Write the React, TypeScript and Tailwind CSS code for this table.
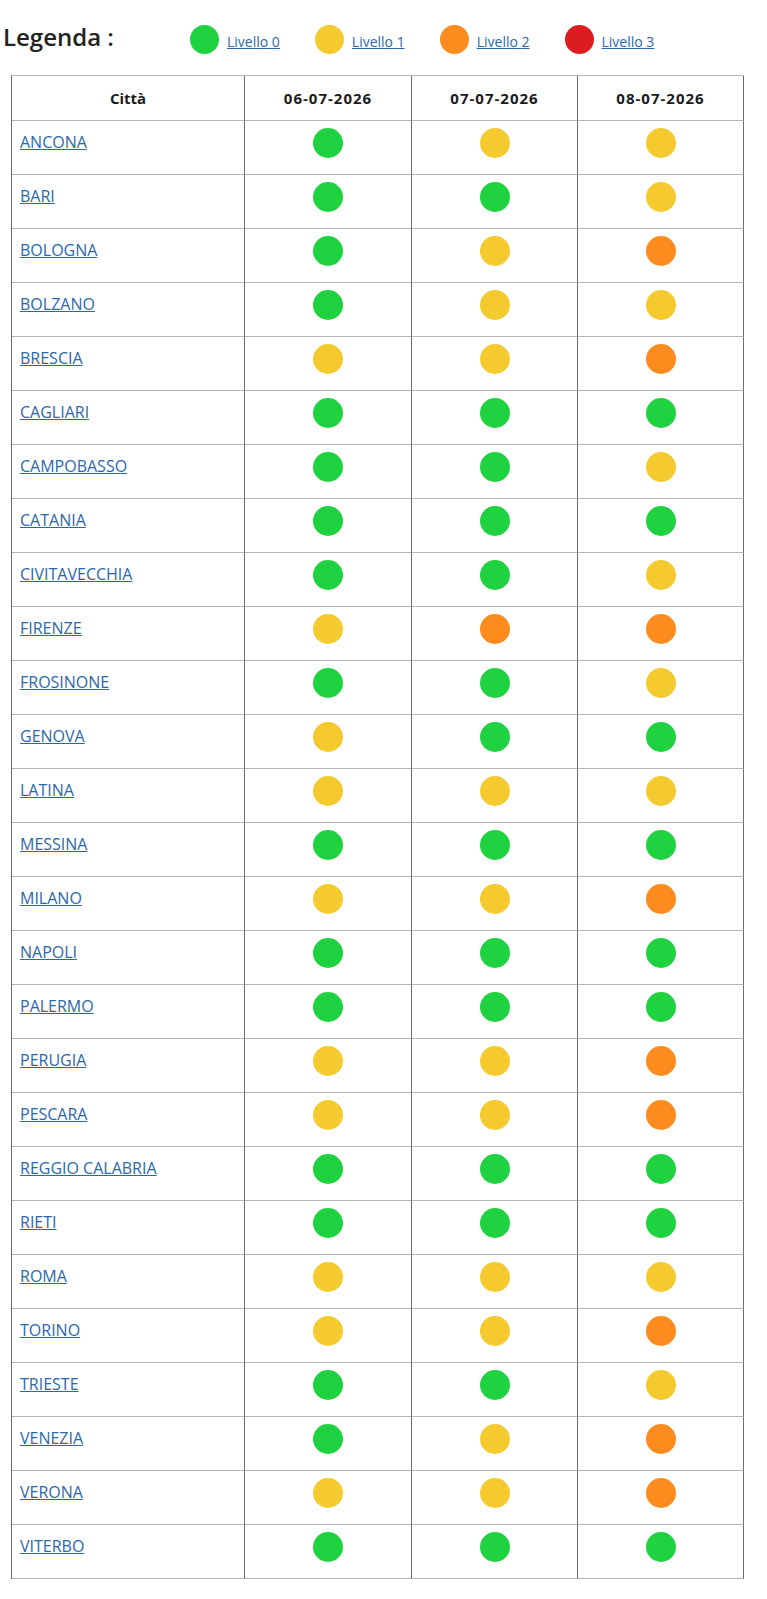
import React from 'react';

type Level = 0 | 1 | 2 | 3;

const levelColor: Record<Level, string> = {
  0: 'bg-[#1fd23f]',
  1: 'bg-[#f4ca2e]',
  2: 'bg-[#fd8b1d]',
  3: 'bg-[#dc1c1f]',
};

const dates = ['06-07-2026', '07-07-2026', '08-07-2026'];

const rows: [string, Level[]][] = [
  ['ANCONA', [0, 1, 1]],
  ['BARI', [0, 0, 1]],
  ['BOLOGNA', [0, 1, 2]],
  ['BOLZANO', [0, 1, 1]],
  ['BRESCIA', [1, 1, 2]],
  ['CAGLIARI', [0, 0, 0]],
  ['CAMPOBASSO', [0, 0, 1]],
  ['CATANIA', [0, 0, 0]],
  ['CIVITAVECCHIA', [0, 0, 1]],
  ['FIRENZE', [1, 2, 2]],
  ['FROSINONE', [0, 0, 1]],
  ['GENOVA', [1, 0, 0]],
  ['LATINA', [1, 1, 1]],
  ['MESSINA', [0, 0, 0]],
  ['MILANO', [1, 1, 2]],
  ['NAPOLI', [0, 0, 0]],
  ['PALERMO', [0, 0, 0]],
  ['PERUGIA', [1, 1, 2]],
  ['PESCARA', [1, 1, 2]],
  ['REGGIO CALABRIA', [0, 0, 0]],
  ['RIETI', [0, 0, 0]],
  ['ROMA', [1, 1, 1]],
  ['TORINO', [1, 1, 2]],
  ['TRIESTE', [0, 0, 1]],
  ['VENEZIA', [0, 1, 2]],
  ['VERONA', [1, 1, 2]],
  ['VITERBO', [0, 0, 0]],
];

const Dot = ({ level, size = 'w-[30px] h-[30px]' }: { level: Level; size?: string }) => (
  <span className={`block rounded-full ${size} ${levelColor[level]}`} />
);

const cell = 'border-r border-b border-r-[#6b6b6b] border-b-[#b5b5b5]';

export default function App() {
  return (
    <div
      className="w-[767px] min-h-[1599px] bg-white pt-[17px] text-[#1b1b1b]"
      style={{ fontFamily: '"Open Sans", "Noto Sans", sans-serif' }}
    >
      {/* legenda */}
      <div className="flex items-start h-[58px] pl-[3px]">
        <span className="w-[187px] pt-[4px] text-[24px] leading-8 font-semibold text-[#222]">Legenda :</span>
        <div className="flex items-center gap-[35px] mt-[8px]">
          {([0, 1, 2, 3] as Level[]).map(l => (
            <div key={l} className="flex items-center gap-[8px]">
              <Dot level={l} size="w-[29px] h-[29px]" />
              <a href="#" className="text-[14px] leading-[18px] pt-[4px] text-[#2a67ad] underline">
                Livello {l}
              </a>
            </div>
          ))}
        </div>
      </div>

      {/* tabella */}
      <div className="ml-[11px] w-[733px] border-l border-t border-l-[#6b6b6b] border-t-[#b5b5b5] grid grid-cols-[233px_167px_166px_166px]">
        <div className={`${cell} h-[45px] flex items-center justify-center text-[15px] font-bold`}>Città</div>
        {dates.map(d => (
          <div key={d} className={`${cell} h-[45px] flex items-center justify-center text-[15px] font-bold tracking-[1px]`}>
            {d}
          </div>
        ))}
        {rows.map(([city, levels]) => (
          <React.Fragment key={city}>
            <div className={`${cell} h-[54px] pl-2 pt-[9px]`}>
              <a href="#" className="text-[16px] leading-[22px] text-[#2a67ad] underline">
                {city}
              </a>
            </div>
            {levels.map((l, i) => (
              <div key={i} className={`${cell} h-[54px] pt-[7px] flex justify-center`}>
                <Dot level={l} />
              </div>
            ))}
          </React.Fragment>
        ))}
      </div>
    </div>
  );
}
